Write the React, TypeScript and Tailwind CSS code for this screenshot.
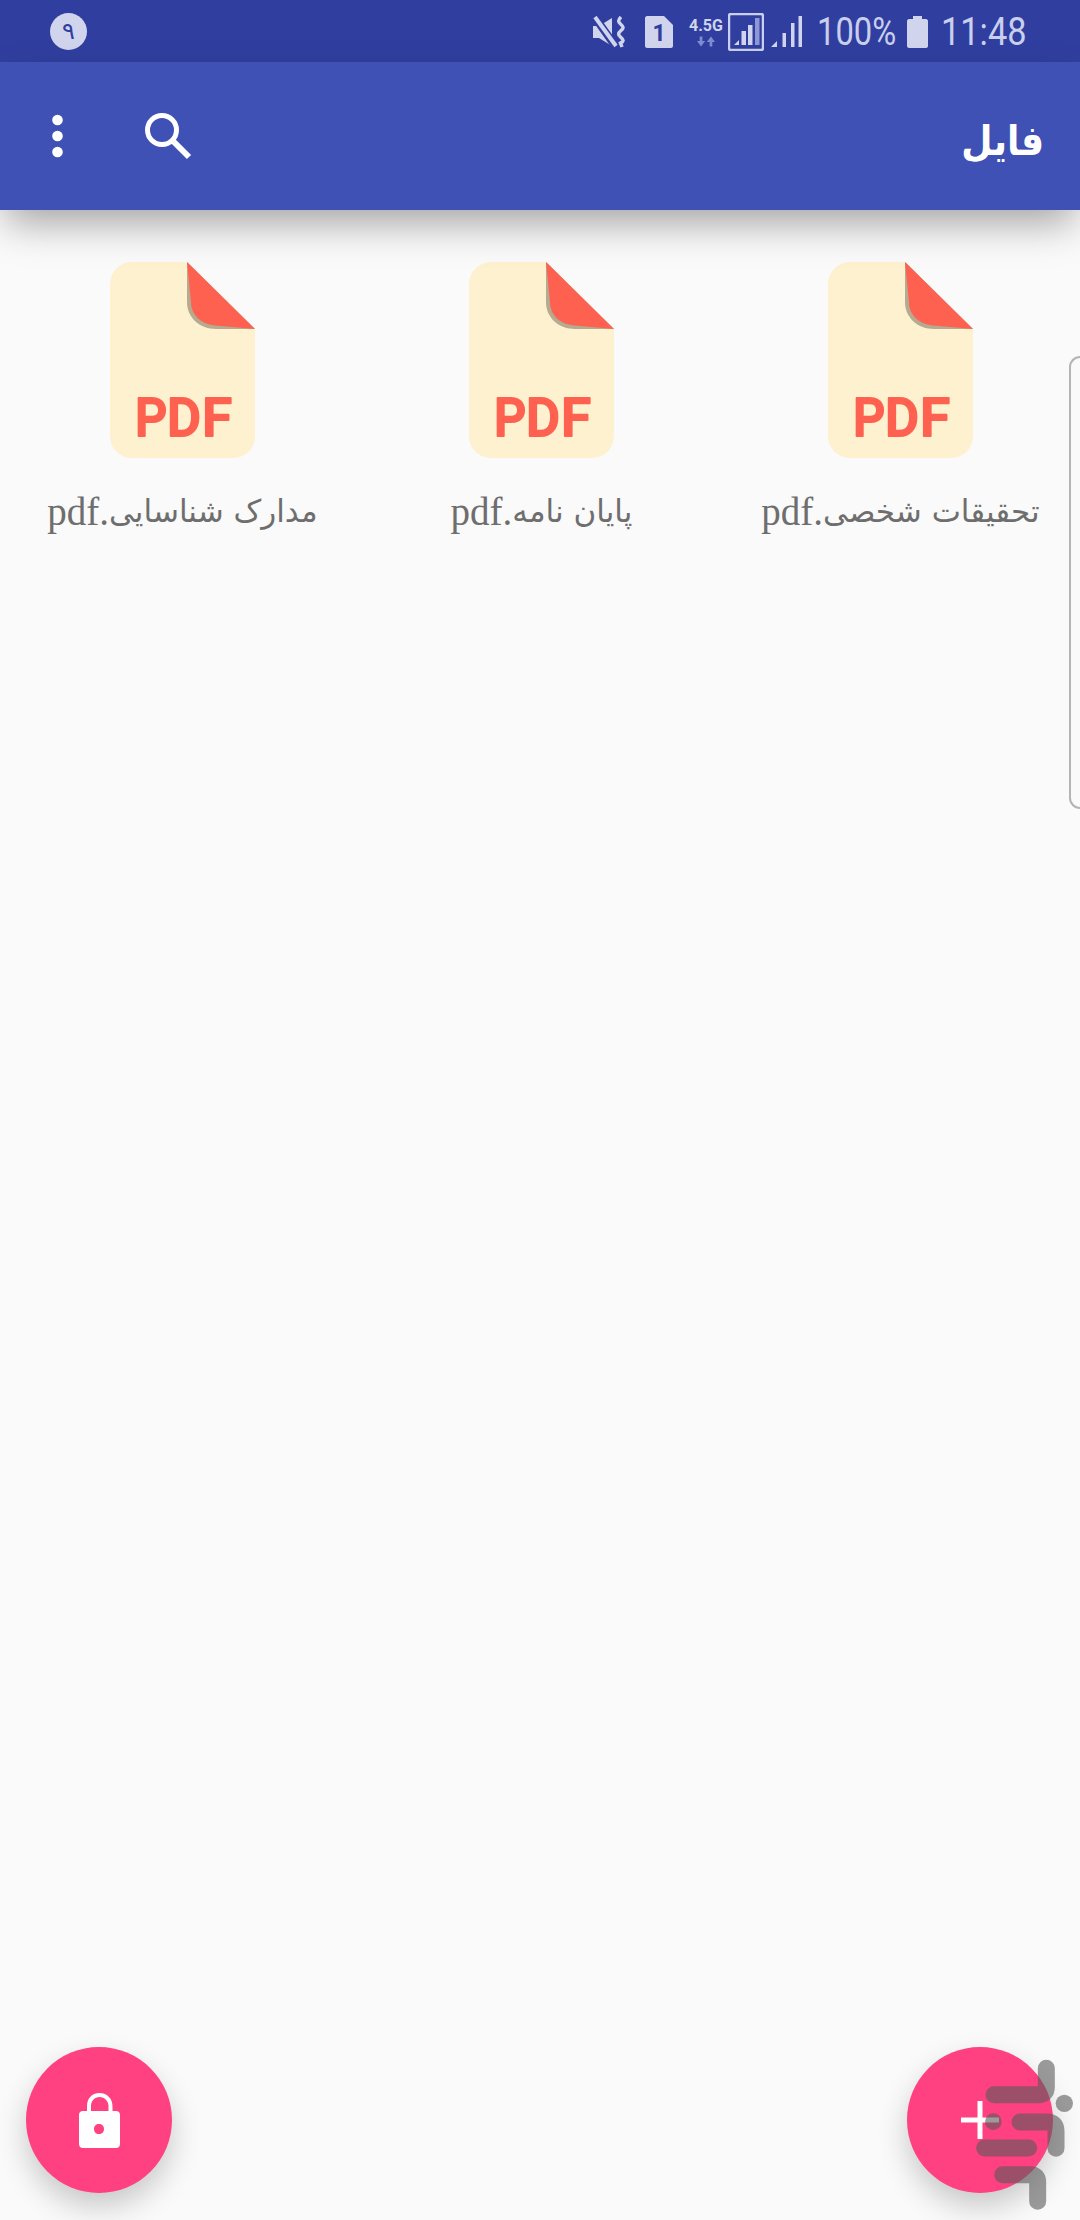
const Pdf = () => (
  <svg width="146" height="197" viewBox="0 0 146 197" className="block">
    <path d="M77 0H22C10 0 0 10 0 22V174C0 187 10 196 23 196H122C135 196 145 187 145 174V67Z" fill="#fdf1d0" />
    <path d="M77 0V40C77 56 90 67 106 67H145Z" fill="#b6ab91" />
    <path d="M77 0L145 67L105 63.500C90 62 81 52 81 40Z" fill="#ff6150" />
    <g fontFamily="Roboto, sans-serif" fontWeight="500" fontSize="54" fill="#ff6150" stroke="#ff6150" strokeWidth="2" strokeLinejoin="round">
      <text x="25" y="174" textLength="32" lengthAdjust="spacingAndGlyphs">P</text>
      <text x="57" y="174" textLength="34" lengthAdjust="spacingAndGlyphs">D</text>
      <text x="92" y="174" textLength="30" lengthAdjust="spacingAndGlyphs">F</text>
    </g>
  </svg>
);

const File = ({ name }: { name: string }) => (
  <div className="flex flex-col items-center">
    <Pdf />
    <div dir="rtl" className="mt-[30px] text-[39px] leading-[44px] text-[#6e6e6e] whitespace-nowrap" style={{ fontFamily: '"Liberation Serif", "DejaVu Sans", serif' }}>
      <span className="align-[3px] text-[31px]" style={{ fontFamily: '"DejaVu Sans", serif' }}>{name}</span>.pdf
    </div>
  </div>
);

export default function App() {
  return (
    <div className="relative flex h-[2220px] w-[1080px] flex-col overflow-hidden bg-[#fafafa]" style={{ fontFamily: 'Roboto, "Noto Sans", sans-serif' }}>
      <div className="flex h-[62px] shrink-0 items-center justify-between bg-[#303f9f] pl-[50px] pr-[58px] text-[#c9cfec]">
        <div className="flex h-[37px] w-[37px] items-center justify-center rounded-full bg-[#d0d4ec] text-[24px] text-[#303f9f]" style={{ fontFamily: '"DejaVu Sans", sans-serif' }}>۹</div>
        <div className="flex items-center pt-[2px]">
          <svg width="34" height="32" viewBox="0 0 34 32" fill="#d0d4ec">
            <path d="M0 10H6L19 2V30L6 22H0Z" />
            <path d="M1 0L23 31" stroke="#303f9f" strokeWidth="8" />
            <path d="M2 1L23 30" stroke="#d0d4ec" strokeWidth="4" />
            <path d="M28 1C25 4 25 6 27.500 8C31 11 31 12 27.500 15C25 17 25 19 27.500 21C31 24 31 25 27.500 27L29 31" fill="none" stroke="#d0d4ec" strokeWidth="3.500" />
          </svg>
          <svg className="ml-[18px]" width="28" height="32" viewBox="0 0 28 32">
            <path d="M2 0H19L28 9V30C28 31 27 32 26 32H2C1 32 0 31 0 30V2C0 1 1 0 2 0Z" fill="#d0d4ec" />
            <text x="14" y="25" textAnchor="middle" fontSize="23" fontWeight="700" fill="#303f9f" fontFamily="Roboto, sans-serif">1</text>
          </svg>
          <div className="ml-[16px] flex w-[34px] flex-col items-center">
            <span className="text-[16px] font-bold leading-[16px] text-[#d0d4ec]">4.5G</span>
            <svg className="mt-[2px]" width="18" height="11" viewBox="0 0 20 11" fill="#7f8ccf">
              <path d="M3 0H6V5H9L4.500 11L0 5H3Z" />
              <path d="M14 11H17V6H20L15.500 0L11 6H14Z" />
            </svg>
          </div>
          <svg className="ml-[5px]" width="36" height="38" viewBox="0 0 36 38">
            <rect x="1" y="1" width="34" height="36" rx="2" fill="none" stroke="#c9cfec" strokeWidth="2.500" />
            <path d="M6 32L11 27V32Z" fill="#d0d4ec" />
            <rect x="13.500" y="18" width="4.500" height="14" fill="#d0d4ec" />
            <rect x="20" y="12" width="4.500" height="20" fill="#d0d4ec" />
            <rect x="27" y="5" width="4.500" height="27" fill="#8d98d4" />
          </svg>
          <svg className="ml-[7px]" width="31" height="32" viewBox="0 0 31 32" fill="#d0d4ec">
            <path d="M0 31L6 25V31Z" />
            <rect x="11.500" y="17" width="3.500" height="14" />
            <rect x="20" y="7" width="3.500" height="24" />
            <rect x="27.500" y="0" width="3.500" height="31" />
          </svg>
          <span className="ml-[15px] w-[77px] origin-left scale-x-[0.84] text-[39px] font-normal leading-none whitespace-nowrap">100%</span>
          <svg className="ml-[13px]" width="21" height="32" viewBox="0 0 21 32" fill="#d0d4ec">
            <path d="M6 0H15V3H19C20 3 21 4 21 5V30C21 31 20 32 19 32H2C1 32 0 31 0 30V5C0 4 1 3 2 3H6Z" />
          </svg>
          <span className="ml-[13px] w-[81px] origin-left scale-x-[0.88] text-[39px] font-normal leading-none whitespace-nowrap">11:48</span>
        </div>
      </div>

      <header className="relative z-10 flex h-[148px] shrink-0 items-center justify-between bg-[#3f51b5] pl-[50px] pr-[36px] shadow-[0_18px_38px_-6px_rgba(0,0,0,0.36)]">
        <div className="flex items-center">
          <svg width="16" height="48" viewBox="0 0 16 48" fill="#fff">
            <circle cx="7.500" cy="8" r="5.300" />
            <circle cx="7.500" cy="24" r="5.300" />
            <circle cx="7.500" cy="40" r="5.300" />
          </svg>
          <svg className="ml-[76px] -mt-[3px]" width="50" height="50" viewBox="0 0 50 50" fill="none" stroke="#fff" strokeWidth="5">
            <circle cx="20" cy="20" r="14.500" />
            <path d="M30.500 30.500L47 47" strokeWidth="6" />
          </svg>
        </div>
        <div dir="rtl" className="mt-[10px] scale-y-[1.15] text-[36px] font-bold leading-none text-white" style={{ fontFamily: '"DejaVu Sans", sans-serif' }}>فایل</div>
      </header>

      <main className="grid flex-1 grid-cols-3 content-start pl-[3px] pt-[52px]">
        <File name="مدارک شناسایی" />
        <File name="پایان نامه" />
        <File name="تحقیقات شخصی" />
      </main>

      <div className="flex shrink-0 justify-between pb-[27px] pl-[26px] pr-[27px]">
        <button className="flex h-[146px] w-[146px] items-center justify-center rounded-full bg-[#ff4081] shadow-[0_14px_30px_rgba(0,0,0,0.2)]">
          <svg width="41" height="55" viewBox="0 0 41 55" fill="#fff">
            <path fillRule="evenodd" d="M20.500 0C28.500 0 33.500 6 33.500 13V18H37C39.500 18 41 19.500 41 22V51C41 53.500 39.500 55 37 55H4C1.500 55 0 53.500 0 51V22C0 19.500 1.500 18 4 18H8V13C8 6 12.500 0 20.500 0ZM20.500 4C15.500 4 12 8 12 13V18H29.500V13C29.500 8 25.500 4 20.500 4ZM20 31C17 31 15 33 15 36C15 39 17 41 20 41C23 41 25 39 25 36C25 33 23 31 20 31Z" />
          </svg>
        </button>
        <button className="flex h-[146px] w-[146px] items-center justify-center rounded-full bg-[#ff4081] shadow-[0_14px_30px_rgba(0,0,0,0.2)]">
          <svg width="38" height="38" viewBox="0 0 38 38" fill="#fff">
            <rect x="0" y="16.500" width="38" height="5" />
            <rect x="16.500" y="0" width="5" height="38" />
          </svg>
        </button>
      </div>

      <div className="absolute right-0 top-[356px] h-[453px] w-[11px] rounded-l-[12px] border-y-2 border-l-2 border-[#b4b4b4]" />

      <svg className="pointer-events-none absolute bottom-0 right-0" width="200" height="200" viewBox="0 0 600 600" fill="none" stroke="#5a5a5a" strokeOpacity="0.6" strokeWidth="51" strokeLinecap="round">
        <path d="M342 224H476Q499 224 499 201V145" />
        <path d="M420 306H500Q528 306 528 334V385" />
        <path d="M314 384H446" />
        <path d="M368 464H450Q473 464 473 487V544" />
        <circle cx="553" cy="250" r="26" fill="#5a5a5a" fillOpacity="0.6" stroke="none" />
        <circle cx="340" cy="305" r="25" fill="#5a5a5a" fillOpacity="0.6" stroke="none" />
      </svg>
    </div>
  );
}
